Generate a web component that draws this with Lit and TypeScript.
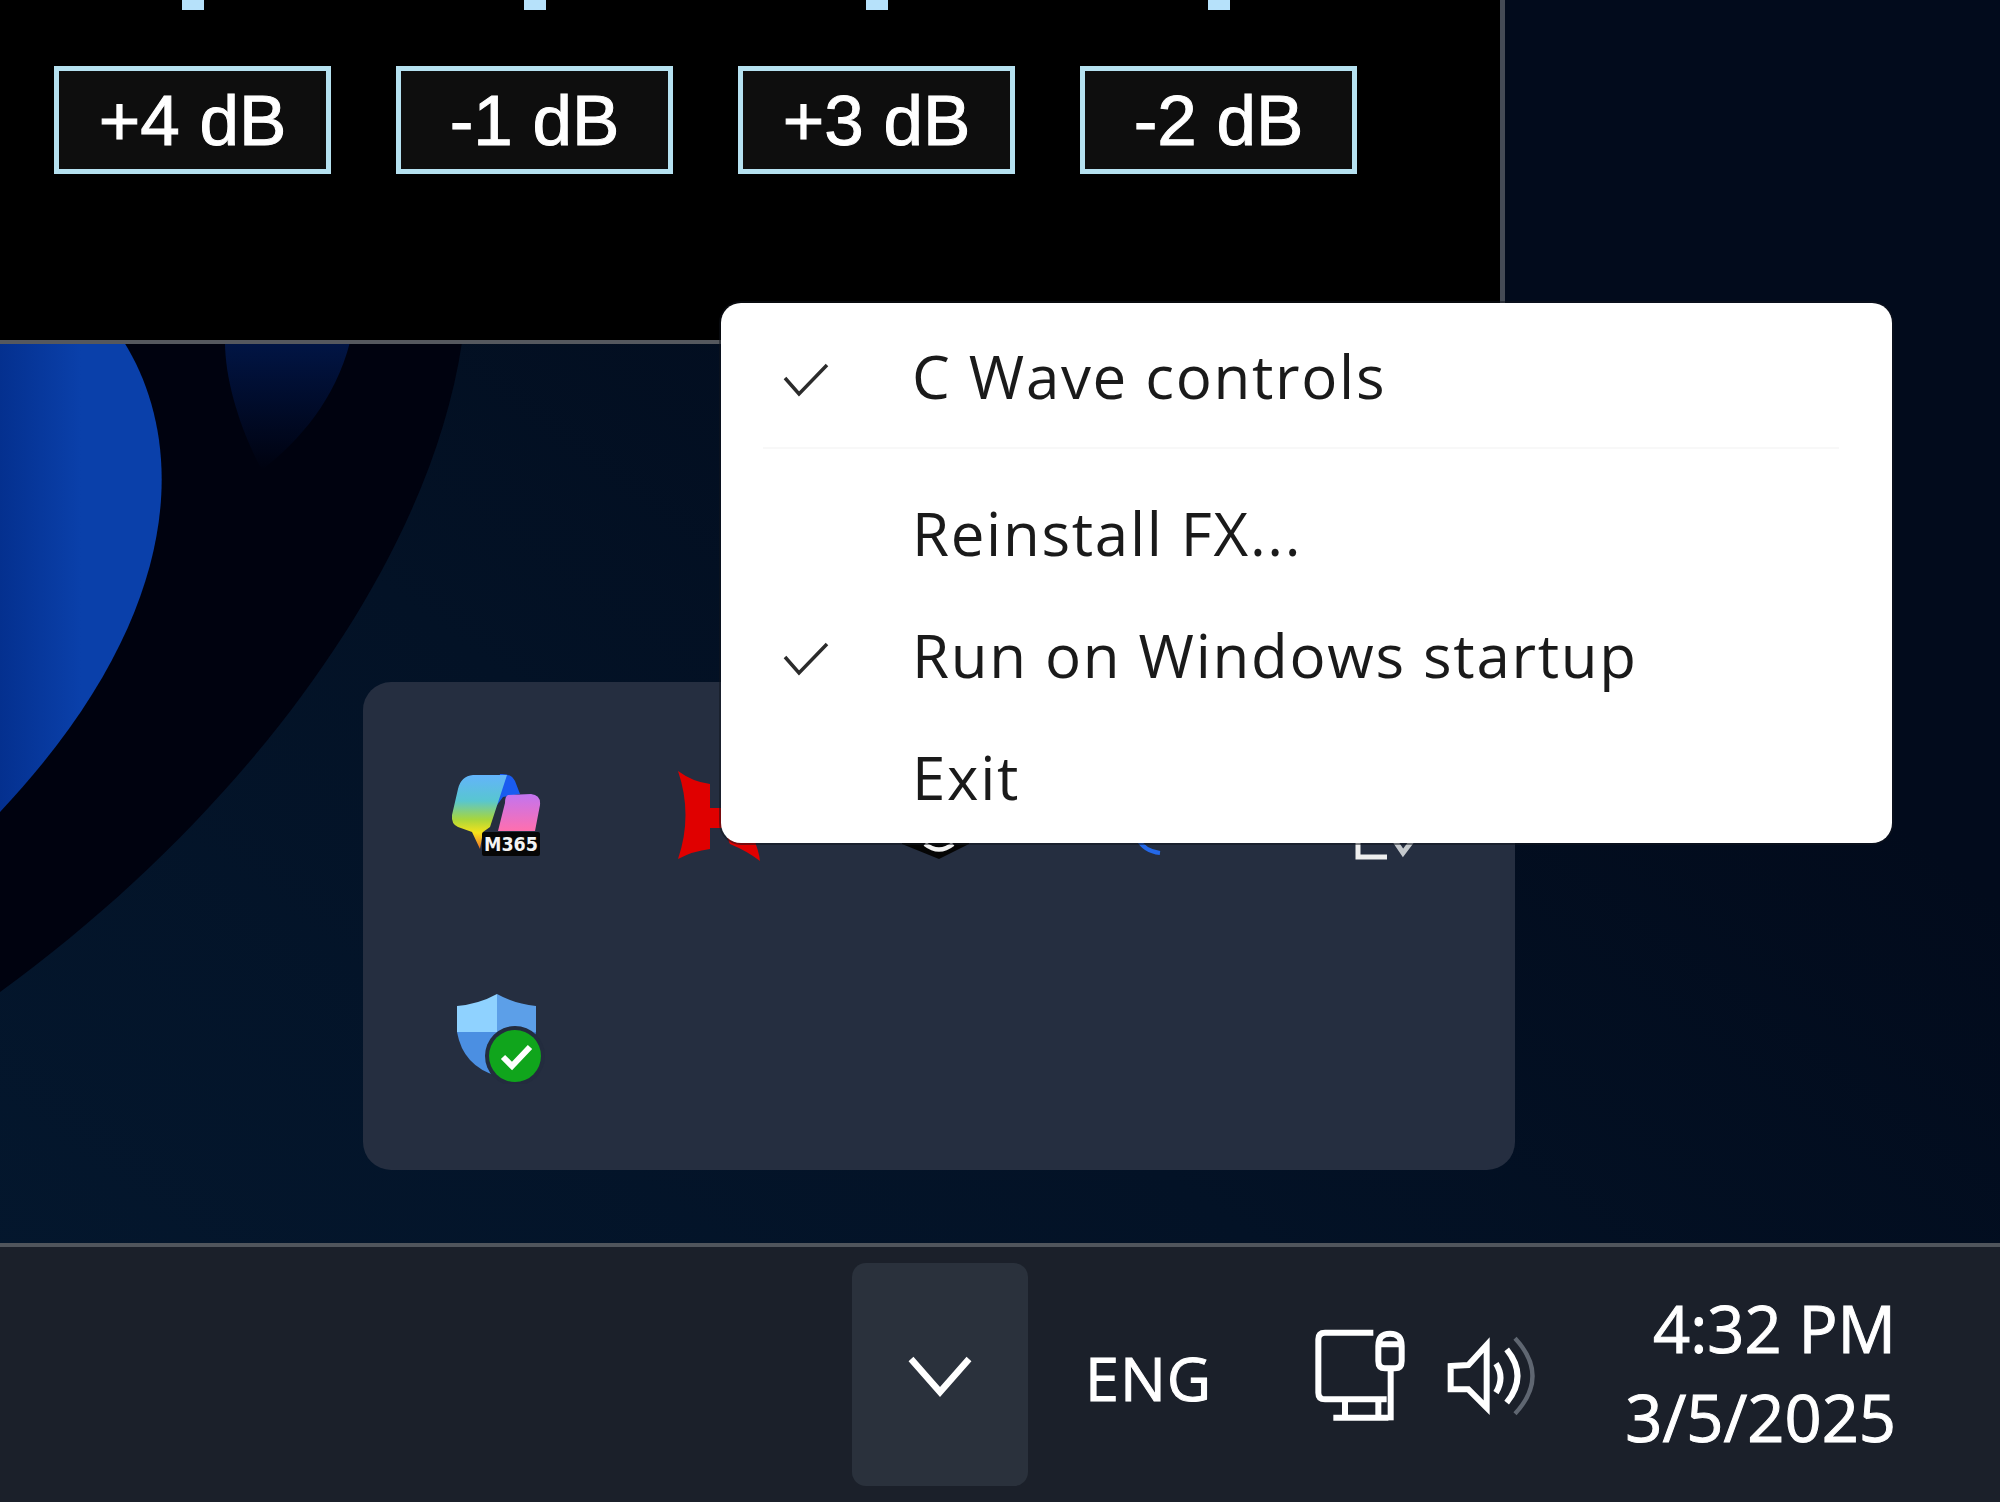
import { LitElement, html, css, svg } from "lit";
import { customElement } from "lit/decorators.js";

const GAINS = ["+4 dB", "-1 dB", "+3 dB", "-2 dB"];
const MENU = [
  { label: "C Wave controls", checked: true },
  { label: "Reinstall FX...", checked: false },
  { label: "Run on Windows startup", checked: true },
  { label: "Exit", checked: false },
];

const check = svg`<svg class="check" viewBox="0 0 60 50" width="60" height="50">
  <path d="M11 22 L25 38 L53 9" fill="none" stroke="#2b2b2b" stroke-width="3.5" />
</svg>`;

const copilot = svg`<svg class="tray-icon" viewBox="0 0 100 100" width="100" height="100">
  <defs>
    <linearGradient id="cp" x1="0" y1="0" x2="0" y2="1">
      <stop offset="0" stop-color="#63b4fb" />
      <stop offset=".35" stop-color="#58c6d0" />
      <stop offset=".6" stop-color="#a8d63c" />
      <stop offset=".78" stop-color="#f5e21b" />
      <stop offset="1" stop-color="#f0702a" />
    </linearGradient>
    <linearGradient id="cq" x1="0" y1="0" x2="0" y2="1">
      <stop offset="0" stop-color="#c274f0" />
      <stop offset="1" stop-color="#ff6fae" />
    </linearGradient>
  </defs>
  <path d="M55 7 Q66 6 70 14 L75 27 L58 30 L49 42 Z" fill="#1a5cf0" />
  <path d="M28 8 L62 8 L45 60 L38 65 L35 82 L27 65 L13 60 Q6 57 7 48 L13 22 Q16 9 28 8 Z" fill="url(#cp)" />
  <path d="M63 28 L86 27 Q96 28 95 38 L90 64 L53 64 L60 36 Q60 29 63 28 Z" fill="url(#cq)" />
  <rect x="37" y="65" width="58" height="24" rx="2" fill="#060606" />
  <text x="39" y="84" font-size="20" font-weight="700" fill="#f4f4f4" textLength="54" lengthAdjust="spacingAndGlyphs" font-family="DejaVu Sans, sans-serif">M365</text>
</svg>`;

const redIcon = svg`<svg class="tray-icon" viewBox="0 0 100 100" width="100" height="100">
  <path d="M11 4 Q26 15 43 17 L43 41 L80 41 L80 61 L43 61 L43 82 Q26 84 11 92 Q26 48 11 4 Z" fill="#e00000" />
  <path d="M60 70 L63 77 Q80 84 93 94 Q92 84 86 70 Z" fill="#e00000" />
</svg>`;

const blackIcon = svg`<svg class="tray-icon" viewBox="0 0 100 100" width="100" height="100">
  <path d="M13 77 L50 92 L80 77 L80 60 L13 60 Z" fill="#050505" />
  <path d="M36 77 Q50 88 64 77" fill="none" stroke="#f2f2f2" stroke-width="4.5" />
</svg>`;

const blueIcon = svg`<svg class="tray-icon" viewBox="0 0 100 100" width="100" height="100">
  <path d="M27 72 Q33 84 49 86" fill="none" stroke="#2468e8" stroke-width="4" />
</svg>`;

const noteIcon = svg`<svg class="tray-icon" viewBox="0 0 100 100" width="100" height="100">
  <path d="M25 60 L25 90 L54 90" fill="none" stroke="#eeeeee" stroke-width="5" />
  <path d="M62 74 L70 86 L82 70" fill="none" stroke="#c4c8cc" stroke-width="5" />
</svg>`;

const shield = svg`<svg class="tray-icon" viewBox="0 0 100 100" width="100" height="100">
  <path d="M52 10 Q34 20 12 22 L12 48 L52 48 Z" fill="#8fd2ff" />
  <path d="M52 10 Q70 20 91 22 L91 48 L52 48 Z" fill="#5c9fe8" />
  <path d="M12 48 L52 48 L52 92 Q18 82 12 48 Z" fill="#4b8fe2" />
  <path d="M52 48 L91 48 Q88 76 52 92 Z" fill="#3f7fd8" />
  <circle cx="70" cy="72" r="30" fill="#232c3e" />
  <circle cx="70" cy="72" r="26" fill="#10a51c" />
  <path d="M58 73 L67 82 L85 63" fill="none" stroke="#ffffff" stroke-width="6" />
</svg>`;

const chevron = svg`<svg viewBox="0 0 176 223" width="176" height="223">
  <path d="M59 96 L88 129 L117 96" fill="none" stroke="#ffffff" stroke-width="6.5" />
</svg>`;

// drawn at 3x the on-screen size, so the coordinates below read as 900x600
const trayGlyphs = svg`<svg class="glyphs" viewBox="0 0 900 600" width="300" height="200">
  <g fill="none" stroke="#ffffff" stroke-width="18">
    <path d="M280 155 L135 155 Q115 155 115 175 L115 335 Q115 355 135 355 L320 355" />
    <path d="M195 355 L195 410 M295 355 L295 410 M160 410 L325 410" />
    <path d="M295 195 Q295 158 330 158 Q365 158 365 195 L365 240 Q365 262 345 262 L315 262 Q295 262 295 240 Z M295 190 L365 190" />
    <path d="M332 262 L332 418" />
    <path d="M512 255 L565 252 L620 192 L620 380 L565 325 L512 325 Z" />
    <path d="M648 248 Q675 290 648 335" />
    <path d="M680 205 Q745 285 680 365" />
  </g>
  <path d="M705 172 Q810 285 705 398" fill="none" stroke="#5f6671" stroke-width="13" />
</svg>`;

const wallpaper = svg`<svg class="wallpaper" viewBox="0 0 2000 1502" width="2000" height="1502">
  <defs>
    <linearGradient id="bg" x1="0" y1="1" x2="1" y2="0">
      <stop offset="0" stop-color="#04182f" />
      <stop offset=".4" stop-color="#031226" />
      <stop offset=".7" stop-color="#020b1c" />
      <stop offset="1" stop-color="#020b1c" />
    </linearGradient>
    <linearGradient id="blob" x1="0" y1="0" x2="1" y2="0">
      <stop offset="0" stop-color="#04308f" />
      <stop offset=".5" stop-color="#0a40aa" />
      <stop offset="1" stop-color="#0a40aa" />
    </linearGradient>
    <linearGradient id="glow" x1="0" y1="0" x2="0" y2="1">
      <stop offset="0" stop-color="#011545" />
      <stop offset="1" stop-color="#00020f" />
    </linearGradient>
  </defs>
  <rect width="2000" height="1502" fill="url(#bg)" />
  <path d="M0 342 L462 342 C430 560 250 810 0 992 Z" fill="#00020f" />
  <path d="M225 342 L350 342 C335 400 300 440 262 470 C240 430 225 380 225 342 Z" fill="url(#glow)" />
  <path d="M0 342 L124 342 C185 440 190 610 0 812 Z" fill="url(#blob)" />
</svg>`;

@customElement("app-root")
export class AppRoot extends LitElement {
  static styles = css`
    :host {
      display: block;
      position: relative;
      width: 2000px;
      height: 1502px;
      overflow: hidden;
      font-family: "Open Sans", "Liberation Sans", sans-serif;
    }

    .screen {
      position: relative;
      height: 100%;
      display: flex;
      flex-direction: column;
    }

    .wallpaper {
      position: absolute;
      inset: 0;
    }

    .window {
      position: relative;
      box-sizing: border-box;
      width: 1505px;
      height: 344px;
      padding: 66px 0 0 54px;
      background: #000;
      border-right: 5px solid #454b55;
      border-bottom: 4px solid #55585e;
    }

    .gains {
      display: flex;
      gap: 65px;
    }

    .gain {
      display: flex;
      flex-direction: column;
      align-items: center;
      width: 277px;
    }

    .tick {
      width: 22px;
      height: 10px;
      margin-top: -66px;
      margin-bottom: 56px;
      background: #b6e1fa;
    }

    .gain-box {
      box-sizing: border-box;
      display: flex;
      align-items: center;
      justify-content: center;
      width: 100%;
      height: 108px;
      border: 5px solid #b5e1f0;
      background: #0e0e0e;
      color: #fff;
      font-family: "Liberation Sans", Arial, sans-serif;
      font-size: 71px;
      -webkit-text-stroke: 1px #fff;
    }

    .desktop {
      position: relative;
      flex: 1;
      padding: 338px 0 0 363px;
    }

    .flyout {
      box-sizing: border-box;
      display: grid;
      grid-template-columns: repeat(5, 222px);
      grid-auto-rows: 217px;
      width: 1152px;
      height: 488px;
      padding: 26px 0 0 21px;
      border-radius: 28px;
      background: #252e40;
    }

    .cell {
      display: flex;
      align-items: center;
      justify-content: center;
    }

    .taskbar {
      position: relative;
      box-sizing: border-box;
      display: flex;
      align-items: center;
      height: 259px;
      padding-left: 852px;
      background: #1b202a;
      border-top: 4px solid #50555c;
      color: #fff;
    }

    .show-hidden {
      display: flex;
      width: 176px;
      height: 223px;
      border-radius: 14px;
      background: #2a313c;
    }

    .lang {
      margin-left: 57px;
      margin-top: 6px;
      font-size: 61px;
      line-height: 1;
      width: 128px;
      letter-spacing: 1px;
      -webkit-text-stroke: 1px #fff;
    }

    .glyphs {
      margin-left: 67px;
      margin-top: 12px;
      flex: none;
    }

    .clock {
      width: 316px;
      text-align: right;
      font-size: 65px;
      line-height: 89px;
      margin-top: -4px;
      white-space: nowrap;
      -webkit-text-stroke: 1px #fff;
    }

    .menu {
      position: absolute;
      left: 721px;
      top: 303px;
      box-sizing: border-box;
      width: 1171px;
      height: 540px;
      padding-top: 12px;
      border-radius: 20px;
      background: #fff;
      box-shadow: 0 0 0 2px #10141c80;
      color: #1a1a1a;
      font-size: 60px;
    }

    .row {
      display: flex;
      align-items: center;
      height: 122px;
      padding-left: 191px;
      position: relative;
      line-height: 1;
      white-space: nowrap;
      letter-spacing: 1.7px;
    }

    .check {
      position: absolute;
      left: 53px;
      top: 41px;
    }

    .sep {
      height: 2px;
      margin: 10px 53px 23px 42px;
      background: #f8f8f8;
    }
  `;

  render() {
    return html`
      <div class="screen">
        ${wallpaper}
        <div class="window">
          <div class="gains">
            ${GAINS.map(
              (g) => html`
                <div class="gain">
                  <div class="tick"></div>
                  <div class="gain-box">${g}</div>
                </div>
              `,
            )}
          </div>
        </div>
        <div class="desktop">
          <div class="flyout">
            ${[copilot, redIcon, blackIcon, blueIcon, noteIcon, shield].map(
              (icon) => html`<div class="cell">${icon}</div>`,
            )}
          </div>
        </div>
        <div class="taskbar">
          <div class="show-hidden">${chevron}</div>
          <div class="lang">ENG</div>
          ${trayGlyphs}
          <div class="clock">4:32 PM<br />3/5/2025</div>
        </div>
      </div>
      <div class="menu">
        ${MENU.map(
          (item, i) => html`
            <div class="row">${item.checked ? check : ""}${item.label}</div>
            ${i === 0 ? html`<div class="sep"></div>` : ""}
          `,
        )}
      </div>
    `;
  }
}
